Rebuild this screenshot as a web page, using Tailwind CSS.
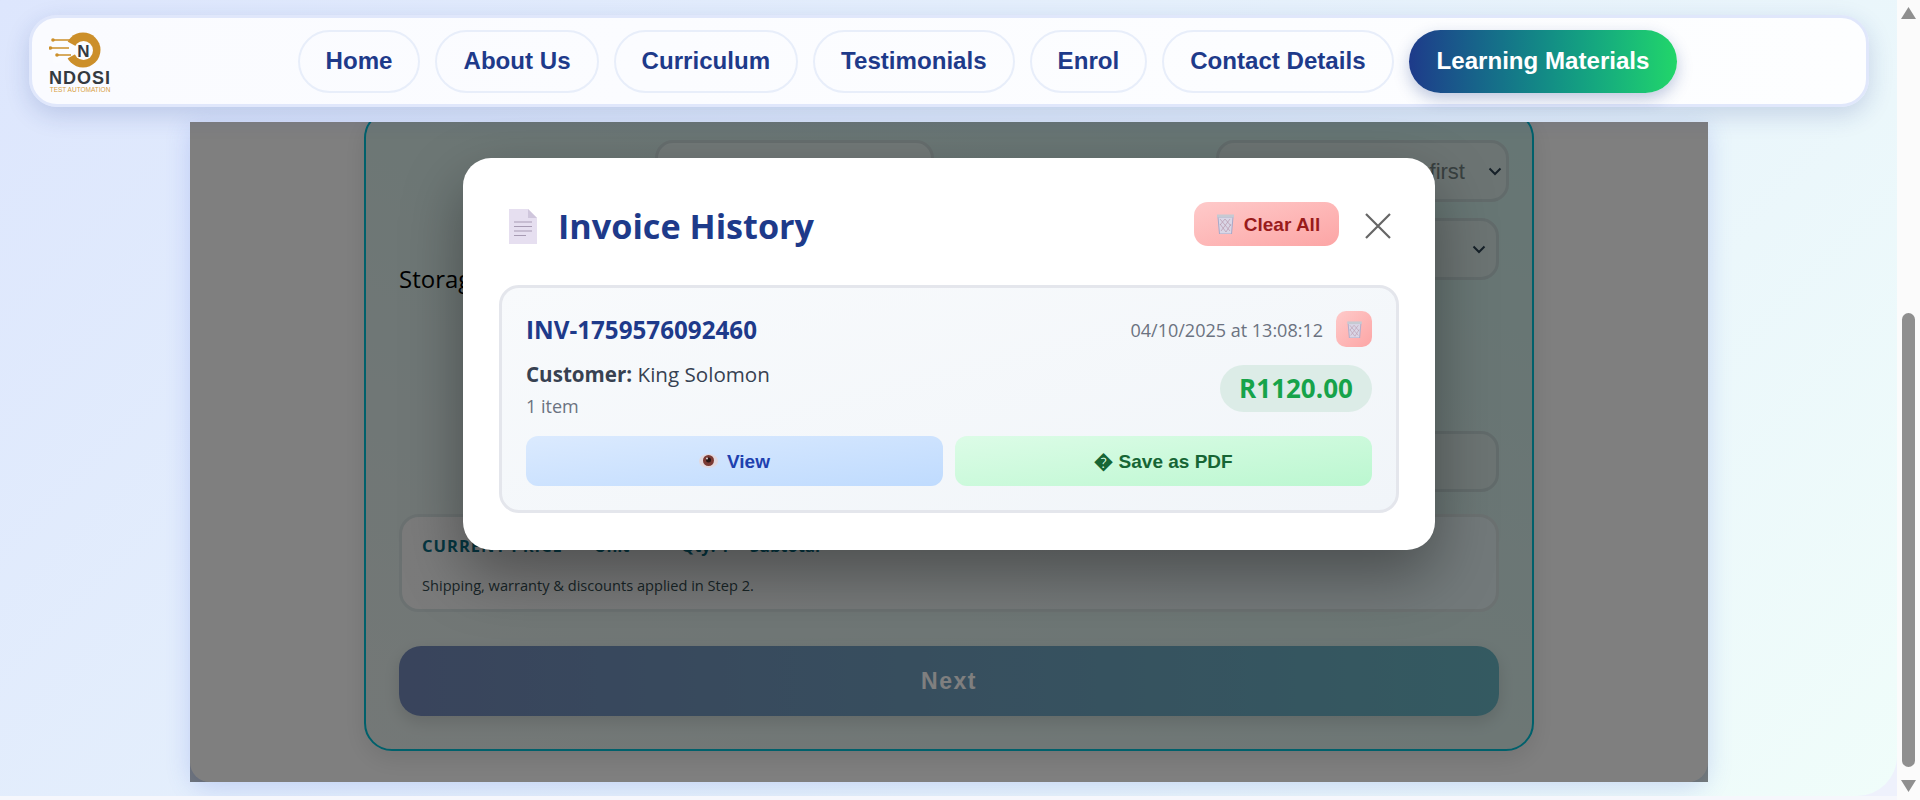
<!DOCTYPE html>
<html lang="en">
<head>
  <meta charset="UTF-8">
  <meta name="viewport" content="width=device-width, initial-scale=1.0">
  <title>Ndosi Test Automation - Invoice History</title>
  <script src="https://cdn.jsdelivr.net/npm/@tailwindcss/browser@4"></script>
</head>
<body class="font-['Open_Sans',sans-serif] overflow-hidden">

<div class="flex w-full h-[800px] overflow-hidden bg-[#f6f7fc]">

  <!-- Page -->
  <div class="flex-1 h-[796px] bg-[#eef1fc]">
    <div class="h-full rounded-br-[40px] bg-linear-135 from-[#dde6fd] to-[#f0fdfa] flex flex-col overflow-hidden">

      <!-- Header -->
      <header class="h-[122px] shrink-0 pt-[15px] pl-[29px] relative z-10">
        <nav class="h-[92px] w-[1840px] flex items-center bg-linear-to-r from-[#fafbff] to-[#fdfeff] border-[3px] border-[#e0e7fb] rounded-[28px] shadow-[0_8px_24px_rgba(30,58,138,0.18)] font-['Liberation_Sans',Arial,sans-serif] font-bold text-[#1e3a8a] text-[24.1px]">
          <!-- Logo -->
          <div class="ml-[17px] w-[62px] shrink-0 flex flex-col items-center">
            <svg class="block" width="62" height="42" viewBox="0 0 62 42">
              <circle cx="34" cy="21" r="17.5" fill="#cc8f2a"/>
              <path d="M34 21 L10 8 H4 V34 H10Z" fill="#fbfcff"/>
              <circle cx="34.5" cy="21.5" r="9.5" fill="#fbfcff"/>
              <path d="M4 11 H22 M0 19 H20 M8 26 H22" stroke="#cc8f2a" stroke-width="1.6" fill="none"/>
              <circle cx="4" cy="11" r="1.8" fill="#cc8f2a"/>
              <circle cx="1.5" cy="19" r="1.8" fill="#cc8f2a"/>
              <circle cx="8" cy="26" r="1.8" fill="#cc8f2a"/>
              <text x="34.5" y="27.5" text-anchor="middle" font-size="17" font-weight="700" fill="#343a40">N</text>
            </svg>
            <span class="text-[18px] leading-[14px] font-black tracking-[1px] text-[#343a40]">NDOSI</span>
            <span class="text-[6.5px] leading-[9px] font-normal text-[#d8a040] whitespace-nowrap">TEST AUTOMATION</span>
          </div>

          <div class="flex-1 flex justify-center gap-[15px] -ml-[2px]">
            <a class="h-[63px] px-[26px] flex items-center rounded-full border-2 border-[#e8eefa]">Home</a>
            <a class="h-[63px] px-[26px] flex items-center rounded-full border-2 border-[#e8eefa]">About Us</a>
            <a class="h-[63px] px-[26px] flex items-center rounded-full border-2 border-[#e8eefa]">Curriculum</a>
            <a class="h-[63px] px-[26px] flex items-center rounded-full border-2 border-[#e8eefa]">Testimonials</a>
            <a class="h-[63px] px-[26px] flex items-center rounded-full border-2 border-[#e8eefa]">Enrol</a>
            <a class="h-[63px] px-[26px] flex items-center rounded-full border-2 border-[#e8eefa]">Contact Details</a>
            <a class="h-[63px] px-[28px] flex items-center rounded-full bg-linear-to-r from-[#1e3a8a] to-[#22d669] text-white shadow-[0_6px_16px_rgba(30,58,138,0.28)]">Learning Materials</a>
          </div>
        </nav>
      </header>

      <!-- Content card with its dimmed overlay -->
      <div class="relative ml-[190px] w-[1518px] h-[660px] shrink-0">
        <div class="h-full rounded-b-[20px] bg-white shadow-[0_6px_24px_rgba(70,100,220,0.22)] overflow-hidden px-[174px]">

          <!-- Step panel, scrolled under the header -->
          <div class="-mt-[12px] h-[641px] rounded-[28px] border-2 border-[#00c0d6] bg-linear-to-tr from-[#e8f0ee] to-[#ccece8] shadow-[0_8px_24px_rgba(0,0,0,0.1)] px-[33px] flex flex-col">
            <div class="mt-[28px] flex h-[62px]">
              <div class="ml-[256px] w-[279px] shrink-0 h-[62px] rounded-[18px] border-[3px] border-[#ccdcdc] bg-[#e4f2f1]"></div>
              <div class="ml-[282px] w-[293px] shrink-0 h-[62px] rounded-[18px] border-[3px] border-[#c4d6d6] bg-[#d8e8e6] flex items-center justify-end pr-[4px] text-[22px]">
                <span class="font-['Liberation_Sans',sans-serif] text-[#708080]">first</span>
                <svg class="ml-[23px]" width="14" height="9" viewBox="0 0 14 9" fill="none" stroke="#2b4050" stroke-width="2"><path d="M1.5 1.5l5.5 5.5 5.5-5.5"/></svg>
              </div>
            </div>
            <div class="mt-[16px] flex h-[62px] items-center justify-between">
              <span class="pt-[59px] text-[24px] leading-[30px] text-black">Storage</span>
              <div class="w-[280px] h-[62px] rounded-[18px] border-[3px] border-[#c4d6d6] bg-[#d8e8e6] flex items-center justify-end pr-[10px]">
                <svg width="14" height="9" viewBox="0 0 14 9" fill="none" stroke="#2b4050" stroke-width="2"><path d="M1.5 1.5l5.5 5.5 5.5-5.5"/></svg>
              </div>
            </div>
            <div class="mt-[151px] h-[61px] w-[600px] self-end rounded-[18px] border-[3px] border-[#c4d6d6] bg-[#d8e8e6]"></div>
            <div class="mt-[22px] h-[98px] rounded-[20px] border-[3px] border-[#d6e2e2] bg-linear-to-r from-[#f6f6f6] to-[#e4f2f4] pl-[20px] pt-[19px]">
              <div class="flex text-[16.5px] leading-[20px] font-bold text-[#0b6d82]">
                <span class="w-[172px] tracking-[1px] whitespace-nowrap">CURRENT PRICE</span>
                <span class="w-[87px]">Unit</span>
                <span class="w-[69px]">Qty: 1</span>
                <span>Subtotal</span>
              </div>
              <p class="mt-[19px] text-[14.6px] leading-[20px] text-[#334a4f]">Shipping, warranty &amp; discounts applied in Step 2.</p>
            </div>
            <button class="mt-[34px] h-[70px] rounded-[22px] bg-linear-to-r from-[#7288b8] to-[#68b4c2] text-white font-['Liberation_Sans',sans-serif] text-[23px] font-bold tracking-[1.5px] shadow-[0_6px_16px_rgba(0,0,0,0.12)]">Next</button>
          </div>
        </div>

        <!-- Overlay -->
        <div class="absolute inset-0 bg-black/50"></div>

        <!-- Invoice History modal -->
        <div class="absolute left-[273px] top-[36px] w-[972px] h-[392px] rounded-[28px] bg-white p-[36px] shadow-[0_25px_60px_rgba(0,0,0,0.35)]">
          <div class="flex items-center h-[64px] mb-[27px]">
            <svg class="ml-[10px]" width="28" height="35" viewBox="0 0 28 35">
              <path d="M0 0 H19 L28 9 V35 H0Z" fill="#e6dff0"/>
              <path d="M19 0 L28 9 H19Z" fill="#cfc6dc"/>
              <path d="M5 13 H23 M5 17.5 H23 M5 22 H23 M5 26.5 H17" stroke="#a79bb3" stroke-width="1.2"/>
            </svg>
            <h2 class="ml-[21px] text-[34.2px] font-bold leading-none text-[#1e3a8a]">Invoice History</h2>
            <button class="ml-auto -mt-[4px] w-[145px] h-[44px] rounded-[14px] bg-linear-to-br from-[#fecaca] to-[#fca5a5] flex items-center justify-center gap-[9px] pl-[3px] font-['Liberation_Sans',sans-serif] font-bold text-[19px] text-[#991b1b]">
              <svg width="19" height="20" viewBox="0 0 19 20">
                <path d="M2 3 H17 L15.5 20 H3.5Z" fill="#d9d6e6" stroke="#a6a8c9" stroke-width="1"/>
                <rect x="1" y="0.5" width="17" height="3" fill="#c5cad3"/>
                <path d="M4 5l10 12M9 5l6 7M4 10l6 8M14 5l-9 12M9 5l-5 6M15 10l-5 8" stroke="#b99aae" stroke-width="0.7"/>
              </svg>
              <span class="pt-[2px]">Clear All</span>
            </button>
            <button class="ml-[26px] mr-[8px]">
              <svg class="block" width="26" height="26" viewBox="0 0 26 26" fill="none" stroke="#666" stroke-width="2.2"><path d="M1 1 L25 25 M25 1 L1 25"/></svg>
            </button>
          </div>

          <!-- Invoice item -->
          <div class="h-[228px] rounded-[20px] border-[3px] border-[#e4e6ec] bg-linear-to-br from-[#f8fafc] to-[#f1f5f9] px-[24px] pt-[23px]">
            <div class="flex items-center h-[36px]">
              <span class="pt-[3px] text-[24.2px] font-bold text-[#1e3a8a]">INV-1759576092460</span>
              <span class="ml-auto pt-[3px] text-[18px] text-[#6b7280]">04/10/2025 at 13:08:12</span>
              <button class="ml-[13px] w-[36px] h-[36px] rounded-[10px] bg-linear-to-br from-[#fecaca] to-[#fca5a5] flex items-center justify-center">
                <svg width="17" height="17" viewBox="0 0 19 20">
                  <path d="M2 3 H17 L15.5 20 H3.5Z" fill="#d9d6e6" stroke="#a6a8c9" stroke-width="1"/>
                  <rect x="1" y="0.5" width="17" height="3" fill="#c5cad3"/>
                  <path d="M4 5l10 12M9 5l6 7M4 10l6 8M14 5l-9 12M9 5l-5 6M15 10l-5 8" stroke="#b99aae" stroke-width="0.7"/>
                </svg>
              </button>
            </div>
            <div class="flex justify-between items-start mt-[13px] h-[76px]">
              <div>
                <p class="text-[20.6px] leading-[28px] text-[#374151]"><strong class="font-bold">Customer:</strong> King Solomon</p>
                <p class="mt-[6px] text-[18px] leading-[24px] text-[#6b7280]">1 item</p>
              </div>
              <span class="mt-[5px] w-[152px] h-[47px] rounded-full bg-[#dcece7] flex items-center justify-center text-[26px] font-bold text-[#16a34a]">R1120.00</span>
            </div>
            <div class="flex gap-[12px] font-['Liberation_Sans',sans-serif] font-bold text-[19px]">
              <button class="flex-1 h-[50px] rounded-[12px] bg-linear-to-br from-[#dbeafe] to-[#bfdbfe] text-[#1e40af] flex items-center justify-center gap-[9px]">
                <svg width="19" height="14" viewBox="0 0 19 14">
                  <ellipse cx="9.5" cy="7" rx="9.5" ry="7" fill="#e2d8de"/>
                  <circle cx="9.5" cy="6.5" r="5.5" fill="#7b3a33"/>
                  <circle cx="9.5" cy="6" r="2.5" fill="#2a1614"/>
                  <circle cx="8" cy="4.5" r="0.9" fill="#f3e9e9"/>
                </svg>
                <span class="pt-[3px]">View</span>
              </button>
              <button class="flex-1 h-[50px] rounded-[12px] bg-linear-to-br from-[#dcfce7] to-[#bbf7d0] text-[#166534] flex items-center justify-center"><span class="pt-[2px]">� Save as PDF</span></button>
            </div>
          </div>
        </div>
      </div>
    </div>
  </div>

  <!-- Scrollbar -->
  <div class="w-[23px] h-full bg-[#fbfbfb] flex flex-col items-center">
    <svg class="mt-[7px]" width="15" height="12" viewBox="0 0 15 12"><path d="M7.5 0 L15 12 H0Z" fill="#8f8f8f"/></svg>
    <div class="mt-[294px] w-[13px] h-[454px] rounded-full bg-[#8f8f8f]"></div>
    <svg class="mt-[13px]" width="15" height="12" viewBox="0 0 15 12"><path d="M7.5 12 L15 0 H0Z" fill="#8f8f8f"/></svg>
  </div>
</div>

</body>
</html>
